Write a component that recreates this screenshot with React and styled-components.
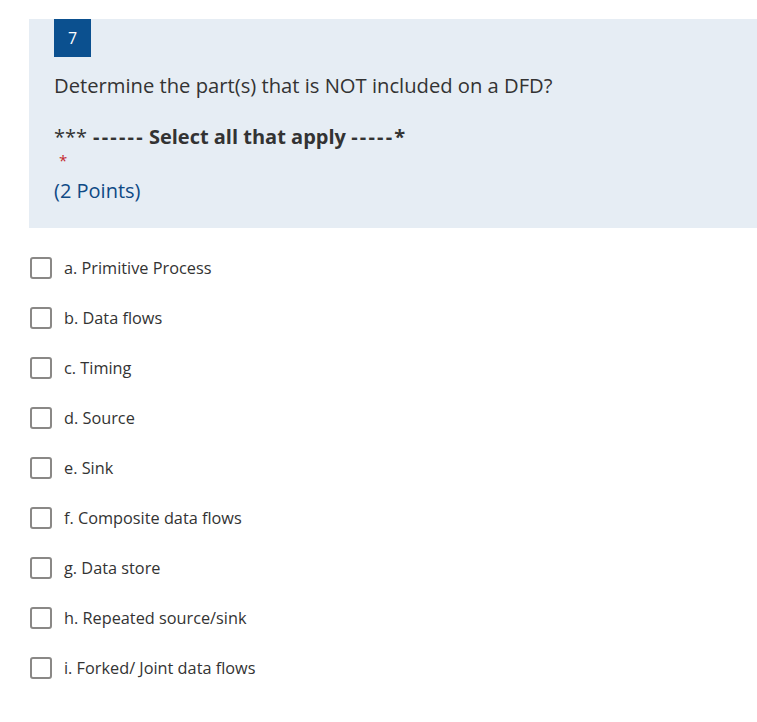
import React from 'react';
import styled, { createGlobalStyle } from 'styled-components';

const GlobalStyle = createGlobalStyle`
  body {
    margin: 0;
    background: #ffffff;
    font-family: 'Open Sans', 'Noto Sans', sans-serif;
    color: #333333;
  }
`;

const Page = styled.div`
  padding: 19px 0 0 29px;
  width: 757px;
  box-sizing: border-box;
`;

const Header = styled.div`
  background: #e6edf4;
  padding: 0 0 23px 25px;
`;

const Badge = styled.div`
  display: flex;
  align-items: center;
  justify-content: center;
  width: 37px;
  height: 38px;
  background: #0b508f;
  color: #ffffff;
  font-size: 16px;
`;

const Title = styled.div`
  margin-top: 14px;
  font-size: 20.2px;
  line-height: 28px;
  color: #333333;
`;

const Hint = styled.div`
  margin-top: 24px;
  font-size: 20px;
  line-height: 28px;
  color: #333333;
  font-weight: 700;
`;

const Stars = styled.span`
  font-weight: 400;
  margin-right: 6px;
`;

const Dashes = styled.span`
  letter-spacing: 2.2px;
  margin-right: ${(p) => p.gap || 0}px;
`;

const Required = styled.div`
  padding-left: 5px;
  font-size: 15px;
  line-height: 18px;
  color: #c4262c;
`;

const Points = styled.div`
  margin-top: 8px;
  font-size: 20px;
  line-height: 28px;
  color: #0f4a85;
`;

const List = styled.div`
  margin-top: 15px;
  padding-left: 1px;
  display: flex;
  flex-direction: column;
`;

const Option = styled.label`
  display: flex;
  align-items: center;
  gap: 12px;
  height: 50px;
  font-size: 16.3px;
  color: #333333;
  cursor: pointer;
`;

const Box = styled.span`
  width: 18px;
  height: 18px;
  border: 2px solid #8a8886;
  border-radius: 3px;
  background: #ffffff;
  flex-shrink: 0;
`;

const options = [
  'a. Primitive Process',
  'b. Data flows',
  'c. Timing',
  'd. Source',
  'e. Sink',
  'f. Composite data flows',
  'g. Data store',
  'h. Repeated source/sink',
  'i. Forked/ Joint data flows',
];

export default function App() {
  return (
    <>
      <GlobalStyle />
      <Page>
        <Header>
          <Badge>7</Badge>
          <Title>Determine the part(s) that is NOT included on a DFD?</Title>
          <Hint>
            <Stars>***</Stars>
            <Dashes gap={4}>------</Dashes>Select all that apply{' '}
            <Dashes>-----</Dashes>*
          </Hint>
          <Required>*</Required>
          <Points>(2 Points)</Points>
        </Header>
        <List>
          {options.map((o) => (
            <Option key={o}>
              <Box />
              {o}
            </Option>
          ))}
        </List>
      </Page>
    </>
  );
}
